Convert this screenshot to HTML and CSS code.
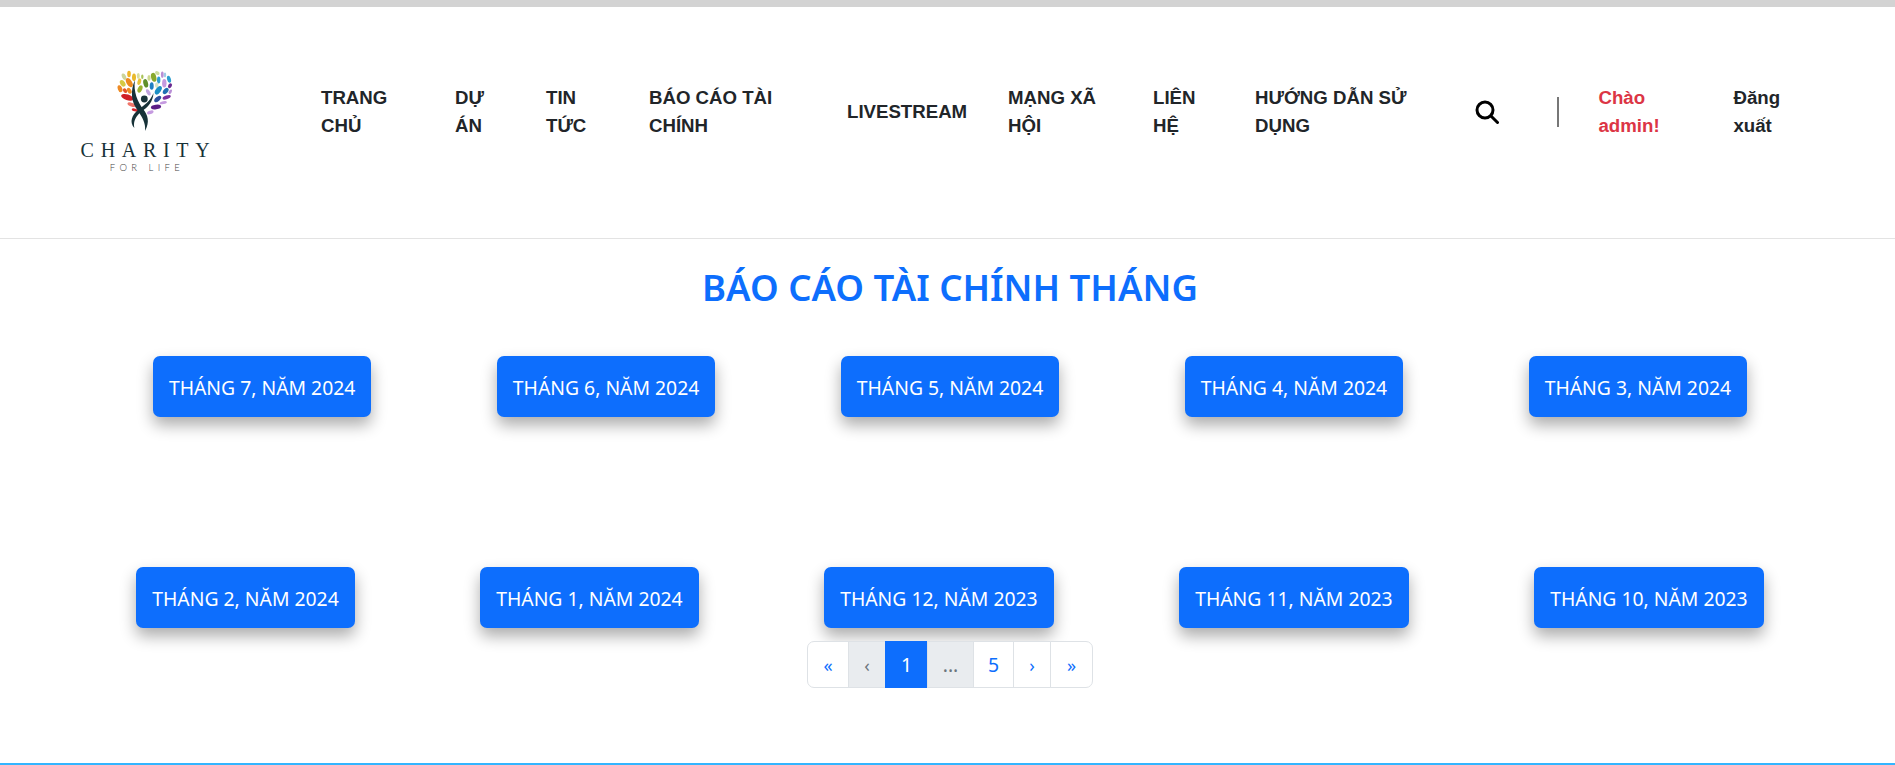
FILE: index.html
```html
<!DOCTYPE html>
<html lang="vi">
<head>
<meta charset="utf-8">
<title>Báo cáo tài chính tháng</title>
<link rel="stylesheet" href="styles.css">
</head>
<body>
<div class="topbar"></div>
<header class="header">
  <a class="logo" href="#">
    <svg class="logo-mark" viewBox="0 0 70 70" width="70" height="70" aria-hidden="true">
      <ellipse cx="10" cy="23.7" rx="2.2" ry="3.6" fill="#ee8a23" transform="rotate(-20 10 23.7)"/>
      <ellipse cx="12.7" cy="18.3" rx="2.4" ry="3.6" fill="#d6c944" transform="rotate(-35 12.7 18.3)"/>
      <ellipse cx="14" cy="11.7" rx="2" ry="3.4" fill="#cdd59a" transform="rotate(-25 14 11.7)"/>
      <ellipse cx="19" cy="9" rx="1.8" ry="3.3" fill="#f0b52a"/>
      <ellipse cx="19.3" cy="17.7" rx="2.7" ry="5" fill="#ec8a1f" transform="rotate(-30 19.3 17.7)"/>
      <ellipse cx="15" cy="25.7" rx="1.8" ry="2.6" fill="#e2562b" transform="rotate(-40 15 25.7)"/>
      <ellipse cx="19.3" cy="25.7" rx="2" ry="3.1" fill="#ee8a23" transform="rotate(-30 19.3 25.7)"/>
      <ellipse cx="24" cy="12.3" rx="2" ry="3.8" fill="#e9b92d"/>
      <ellipse cx="28.3" cy="11" rx="1.5" ry="2.9" fill="#d9dd9e"/>
      <ellipse cx="29.3" cy="16.7" rx="1.8" ry="3.4" fill="#e8c33a" transform="rotate(15 29.3 16.7)"/>
      <ellipse cx="32.3" cy="11.7" rx="1.2" ry="2.2" fill="#a9c35a"/>
      <ellipse cx="35.7" cy="18.3" rx="2.3" ry="4.3" fill="#5f8f2a" transform="rotate(-15 35.7 18.3)"/>
      <ellipse cx="30" cy="24" rx="2.2" ry="3.8" fill="#9bb22f" transform="rotate(25 30 24)"/>
      <ellipse cx="39" cy="13" rx="1.6" ry="2.9" fill="#cdd88f"/>
      <ellipse cx="43.7" cy="12.3" rx="2.6" ry="4.5" fill="#88a92c" transform="rotate(-15 43.7 12.3)"/>
      <ellipse cx="47.3" cy="8" rx="2.4" ry="1.8" fill="#cddc9e" transform="rotate(30 47.3 8)"/>
      <ellipse cx="48.7" cy="15" rx="1.7" ry="3.4" fill="#2c9ed0"/>
      <ellipse cx="46.7" cy="20.3" rx="1.7" ry="2.9" fill="#d7e6c8"/>
      <ellipse cx="41.7" cy="21" rx="2" ry="3.8" fill="#1f7fc2"/>
      <ellipse cx="52.3" cy="9.7" rx="1.4" ry="3.1" fill="#b98fd6"/>
      <ellipse cx="55" cy="10" rx="1.2" ry="2.4" fill="#9ecbe6"/>
      <ellipse cx="59" cy="14.3" rx="1.9" ry="3.6" fill="#2c9ed0" transform="rotate(-15 59 14.3)"/>
      <ellipse cx="54.3" cy="18.3" rx="2.2" ry="4.3" fill="#c59ae0"/>
      <ellipse cx="60" cy="20.7" rx="1.8" ry="2.6" fill="#6a2a91" transform="rotate(30 60 20.7)"/>
      <ellipse cx="48.3" cy="25.3" rx="2.6" ry="4.8" fill="#1b8fc4" transform="rotate(35 48.3 25.3)"/>
      <ellipse cx="55.7" cy="26" rx="2.2" ry="3.6" fill="#1f6fb2" transform="rotate(40 55.7 26)"/>
      <ellipse cx="60.3" cy="26.7" rx="1.4" ry="2.4" fill="#b98fd6" transform="rotate(30 60.3 26.7)"/>
      <ellipse cx="38.3" cy="27.3" rx="1.8" ry="3.4" fill="#bfa3dd" transform="rotate(-30 38.3 27.3)"/>
      <ellipse cx="56.7" cy="32.3" rx="1.8" ry="4.3" fill="#7b2f9e" transform="rotate(70 56.7 32.3)"/>
      <ellipse cx="47.7" cy="34" rx="2.2" ry="4.1" fill="#2d4f9c" transform="rotate(50 47.7 34)"/>
      <ellipse cx="53.3" cy="37.7" rx="1.4" ry="3.6" fill="#c59ae0" transform="rotate(78 53.3 37.7)"/>
      <ellipse cx="46" cy="42" rx="2.3" ry="5.2" fill="#5a1d86" transform="rotate(82 46 42)"/>
      <ellipse cx="40.3" cy="47.3" rx="1.7" ry="3.4" fill="#c59ae0" transform="rotate(70 40.3 47.3)"/>
      <ellipse cx="17.3" cy="32.3" rx="2.9" ry="6.4" fill="#cf2027" transform="rotate(-72 17.3 32.3)"/>
      <ellipse cx="21.7" cy="39.7" rx="1.9" ry="4.4" fill="#f0766a" transform="rotate(-72 21.7 39.7)"/>
      <ellipse cx="25" cy="45" rx="1.4" ry="3.3" fill="#d8232a" transform="rotate(-75 25 45)"/>
      <path d="M25 15 C23 27 28 37 33 44 C38 50 40 57 35 66 C36 58 32 52 28 46 C21 37 20 26 25 15Z" fill="#173238"/>
      <path d="M43.5 28 C43 37 38 42 31 47 C26 51 23 56 24.3 63 C19 57 22 50 28 45 C34 40 40 37 43.5 28Z" fill="#173238"/>
      <circle cx="34.3" cy="34" r="3.4" fill="#173238"/>
    </svg>
    <span class="logo-name">CHARITY</span>
    <span class="logo-sub">FOR LIFE</span>
  </a>
  <nav class="nav">
    <a class="nav-link w-home" href="#">TRANG CHỦ</a>
    <a class="nav-link w-project" href="#">DỰ ÁN</a>
    <a class="nav-link w-news" href="#">TIN TỨC</a>
    <a class="nav-link w-report" href="#">BÁO CÁO TÀI CHÍNH</a>
    <a class="nav-link w-live" href="#">LIVESTREAM</a>
    <a class="nav-link w-social" href="#">MẠNG XÃ HỘI</a>
    <a class="nav-link w-contact" href="#">LIÊN HỆ</a>
    <a class="nav-link w-guide" href="#">HƯỚNG DẪN SỬ DỤNG</a>
    <a class="search" href="#" aria-label="Tìm kiếm">
      <svg viewBox="0 0 24 24" width="24" height="24" fill="none" stroke="#000" stroke-width="3" stroke-linecap="round">
        <circle cx="10" cy="10" r="8"/>
        <path d="M16 16 L22.5 22.5"/>
      </svg>
    </a>
    <span class="divider"></span>
    <a class="nav-link greet" href="#">Chào admin!</a>
    <a class="nav-link logout" href="#">Đăng xuất</a>
  </nav>
</header>
<main class="main">
  <h1 class="title">BÁO CÁO TÀI CHÍNH THÁNG</h1>
  <div class="row">
    <a class="month" href="#">THÁNG 7, NĂM 2024</a>
    <a class="month" href="#">THÁNG 6, NĂM 2024</a>
    <a class="month" href="#">THÁNG 5, NĂM 2024</a>
    <a class="month" href="#">THÁNG 4, NĂM 2024</a>
    <a class="month" href="#">THÁNG 3, NĂM 2024</a>
  </div>
  <div class="row">
    <a class="month" href="#">THÁNG 2, NĂM 2024</a>
    <a class="month" href="#">THÁNG 1, NĂM 2024</a>
    <a class="month" href="#">THÁNG 12, NĂM 2023</a>
    <a class="month" href="#">THÁNG 11, NĂM 2023</a>
    <a class="month" href="#">THÁNG 10, NĂM 2023</a>
  </div>
  <ul class="pagination">
    <li class="page p-first"><a href="#">«</a></li>
    <li class="page p-prev off"><a href="#">‹</a></li>
    <li class="page p-one on"><a href="#">1</a></li>
    <li class="page p-gap off"><a href="#">...</a></li>
    <li class="page p-five"><a href="#">5</a></li>
    <li class="page p-next"><a href="#">›</a></li>
    <li class="page p-last"><a href="#">»</a></li>
  </ul>
</main>
<footer class="footer"></footer>
</body>
</html>
```

FILE: styles.css
```css
* { box-sizing: border-box; }
html, body { margin: 0; padding: 0; }
body {
  height: 765px;
  overflow: hidden;
  background: #fff;
  display: flex;
  flex-direction: column;
  font-family: "Noto Sans", "Open Sans", sans-serif;
}
a { text-decoration: none; }
.topbar { height: 7px; background: #d3d3d3; }
.header {
  height: 232px;
  border-bottom: 1px solid #e3e3e3;
  display: flex;
  align-items: center;
  padding-left: 80px;
}
.logo {
  width: 130px;
  margin-bottom: 6px;
  display: flex;
  flex-direction: column;
  align-items: center;
  color: #173238;
  font-family: "Liberation Serif", serif;
}
.logo-mark { display: block; }
.logo-name { font-size: 20px; letter-spacing: 6.7px; line-height: 24px; margin-top: 3px; margin-right: -7px; }
.logo-sub { font: 300 9.5px/12px Lato, sans-serif; letter-spacing: 4.4px; color: #444; margin-right: -4px; }
.nav { display: flex; align-items: center; margin-left: 111px; margin-bottom: 22px; }
.nav-link {
  display: block;
  color: #212529;
  font: 700 18.65px/28px "Liberation Sans", Arial, sans-serif;
}
.w-home { width: 134px; padding-right: 50px; }
.w-project { width: 91px; padding-right: 50px; }
.w-news { width: 103px; padding-right: 50px; }
.w-report { width: 198px; padding-right: 40px; }
.w-live { width: 161px; padding-right: 30px; }
.w-social { width: 145px; padding-right: 40px; }
.w-contact { width: 102px; padding-right: 40px; }
.w-guide { width: 218px; padding-right: 40px; }
.search { display: block; margin-left: 2px; height: 24px; }
.search svg { display: block; }
.divider { width: 1.5px; height: 30px; background: #777; margin-left: 58px; margin-right: 40px; }
.greet { color: #dc3545; width: 135px; padding-right: 50px; }
.logout { width: 60px; }
.main { flex: 1; display: flex; flex-direction: column; align-items: center; padding-left: 5px; }
.title {
  margin: 23px 0 0;
  color: #0d6efd;
  font-size: 36.5px;
  line-height: 50px;
  font-weight: 600;
}
.row {
  display: flex;
  justify-content: center;
  gap: 125.5px;
  width: 100%;
  margin-top: 44px;
}
.row + .row { margin-top: 150px; }
.month {
  height: 61px;
  padding: 1px 16px 0;
  display: flex;
  align-items: center;
  background: #0d6efd;
  color: #fff;
  font-size: 19.35px;
  border-radius: 7px;
  box-shadow: 0 8px 16px rgba(0, 0, 0, .33);
}
.pagination {
  list-style: none;
  display: flex;
  margin: 13px 0 0;
  padding: 0;
  height: 47px;
}
.page a {
  display: flex;
  align-items: center;
  justify-content: center;
  height: 47px;
  border: 1px solid #dee2e6;
  margin-left: -1px;
  color: #0d6efd;
  background: #fff;
  font-size: 19.4px;
}
.p-first a, .p-prev a, .p-next a, .p-last a { font-size: 18px; }
.p-first a { width: 42px; margin-left: 0; border-radius: 7px 0 0 7px; }
.p-prev a { width: 38px; }
.p-one a { width: 43px; }
.p-gap a { width: 47px; }
.p-five a { width: 41px; }
.p-next a { width: 38px; }
.p-last a { width: 43px; border-radius: 0 7px 7px 0; }
.off a { background: #e9ecef; color: #6c757d; }
.on a { background: #0d6efd; border-color: #0d6efd; color: #fff; }
.footer { height: 2px; background: #33b5ff; margin-top: auto; }
```
